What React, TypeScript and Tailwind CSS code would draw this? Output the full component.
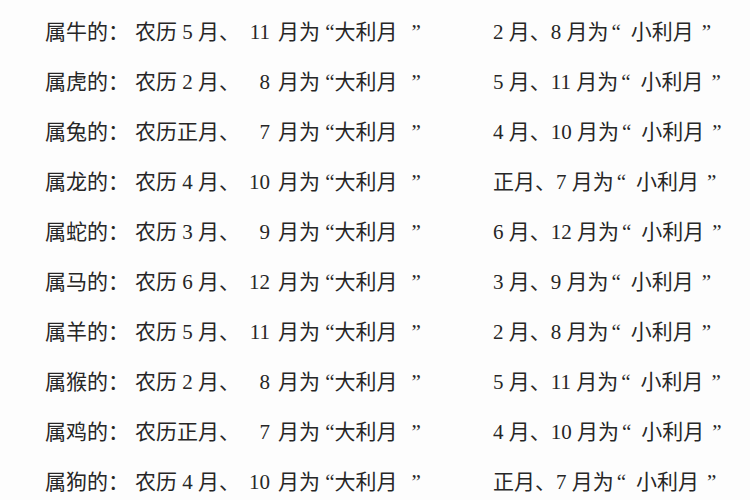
const rows = [
  { animal: '牛', m1: ' 5 月', m2: '11', r: '2 月、8 月为' },
  { animal: '虎', m1: ' 2 月', m2: '8', r: '5 月、11 月为' },
  { animal: '兔', m1: '正月', m2: '7', r: '4 月、10 月为' },
  { animal: '龙', m1: ' 4 月', m2: '10', r: '正月、7 月为' },
  { animal: '蛇', m1: ' 3 月', m2: '9', r: '6 月、12 月为' },
  { animal: '马', m1: ' 6 月', m2: '12', r: '3 月、9 月为' },
  { animal: '羊', m1: ' 5 月', m2: '11', r: '2 月、8 月为' },
  { animal: '猴', m1: ' 2 月', m2: '8', r: '5 月、11 月为' },
  { animal: '鸡', m1: '正月', m2: '7', r: '4 月、10 月为' },
  { animal: '狗', m1: ' 4 月', m2: '10', r: '正月、7 月为' },
]

export default function App() {
  return (
    <div className="w-[750px] h-[500px] overflow-hidden bg-[#fdfdfd] pt-[7px] text-[21px] leading-none text-[#262626] font-['Liberation_Serif','Noto_Sans_CJK_SC',serif]">
      {rows.map((row) => (
        <div key={row.animal} className="h-[50px] flex items-center pl-[45px] whitespace-pre">
          {/* 左：大利月 */}
          <div className="w-[448px] flex items-center">
            <div className="w-[203px] flex">
              <span>属{row.animal}的：</span>
              <span className="ml-[6px]">农历{row.m1}、</span>
            </div>
            <span className="w-[22px] text-right">{row.m2}</span>
            <span className="ml-[8px]">月为 “大利月</span>
            <span className="ml-[14px]">”</span>
          </div>
          {/* 右：小利月 */}
          <div className="flex items-center">
            <span>{row.r}</span>
            <span className="ml-[3px]">“</span>
            <span className="ml-[10px]">小利月</span>
            <span className="ml-[8px]">”</span>
          </div>
        </div>
      ))}
    </div>
  )
}
